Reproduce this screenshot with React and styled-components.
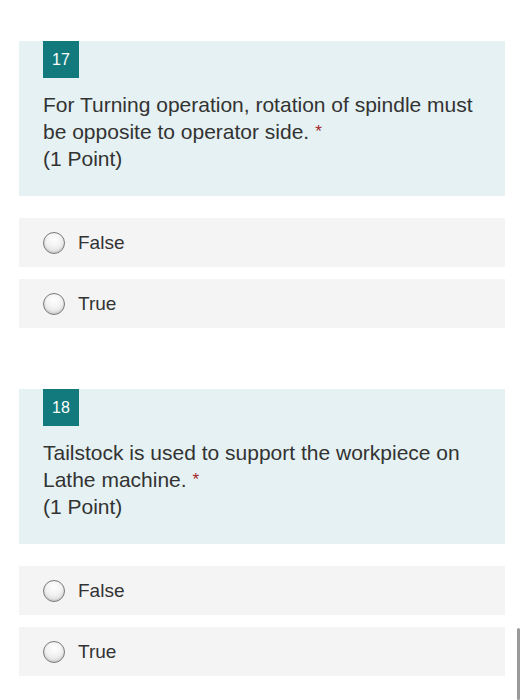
import styled, { createGlobalStyle } from 'styled-components';

const GlobalStyle = createGlobalStyle`
  html, body {
    margin: 0;
    padding: 0;
    background: #fff;
    overflow: hidden;
  }
  body {
    font-family: "Liberation Sans", Arial, sans-serif;
    color: #333;
  }
`;

const Page = styled.div`
  position: relative;
  height: 700px;
  padding: 41px 20px 0 19px;
  box-sizing: border-box;
  display: flex;
  flex-direction: column;
`;

const Question = styled.section`
  display: flex;
  flex-direction: column;
  margin-bottom: ${({ last }) => (last ? 0 : 61)}px;
`;

const Card = styled.div`
  background: #e5f1f2;
  padding: 0 20px 24px 24px;
`;

const Badge = styled.div`
  width: 36px;
  height: 37px;
  background: #127a7d;
  color: #fff;
  font-size: 16px;
  display: flex;
  align-items: center;
  justify-content: center;
`;

const Title = styled.p`
  margin: 13px 0 0;
  font-size: 21px;
  line-height: 27px;
  color: #333;
`;

const Required = styled.span`
  color: #a4262c;
  margin-left: 6px;
  font-size: 17px;
  vertical-align: top;
`;

const Options = styled.div`
  display: flex;
  flex-direction: column;
  gap: 12px;
  margin-top: 22px;
`;

const Option = styled.label`
  height: 49px;
  background: #f4f4f4;
  display: flex;
  align-items: center;
  padding-left: 24px;
  gap: 13px;
  font-size: 19px;
  color: #333;
`;

const Radio = styled.span`
  width: 20px;
  height: 20px;
  border-radius: 50%;
  border: 1px solid #7a7a7a;
  background: radial-gradient(circle at 50% 30%, #ffffff 0%, #f2f2f2 45%, #d4d4d4 100%);
  box-shadow: inset 0 -1px 2px rgba(0, 0, 0, 0.12);
`;

const Scrollbar = styled.div`
  position: absolute;
  right: 5px;
  top: 628px;
  width: 3px;
  height: 72px;
  border-radius: 2px;
  background: #9a9a9a;
`;

const questions = [
  {
    number: 17,
    text: 'For Turning operation, rotation of spindle must be opposite to operator side.',
  },
  {
    number: 18,
    text: 'Tailstock is used to support the workpiece on Lathe machine.',
  },
];

const App = () => (
  <>
    <GlobalStyle />
    <Page>
      {questions.map((q, i) => (
        <Question key={q.number} last={i === questions.length - 1}>
          <Card>
            <Badge>{q.number}</Badge>
            <Title>
              {q.text}
              <Required>*</Required>
              <br />
              (1 Point)
            </Title>
          </Card>
          <Options>
            {['False', 'True'].map((label) => (
              <Option key={label}>
                <Radio />
                {label}
              </Option>
            ))}
          </Options>
        </Question>
      ))}
      <Scrollbar />
    </Page>
  </>
);

export default App;
